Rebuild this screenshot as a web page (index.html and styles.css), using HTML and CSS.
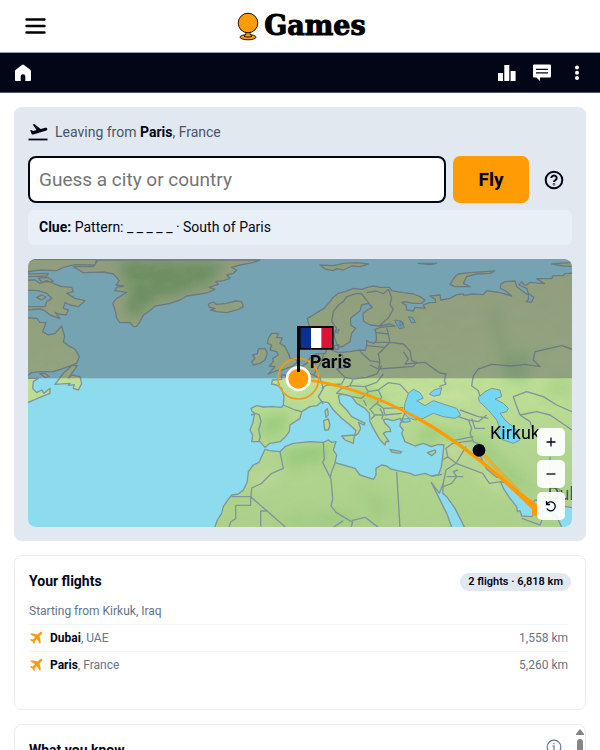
FILE: index.html
```
<!DOCTYPE html>
<html lang="en">
<head>
<meta charset="utf-8">
<meta name="viewport" content="width=device-width, initial-scale=1">
<title>Games</title>
<link rel="stylesheet" href="styles.css">
</head>
<body>
<header class="top">
  <button class="icon-btn" type="button" aria-label="Menu">
    <svg width="22" height="18" viewBox="0 0 22 18"><path d="M2.500 2.500h18M2.500 9h18M2.500 15.500h18" stroke="#000" stroke-width="2.400" stroke-linecap="round"/></svg>
  </button>
  <a class="brand" href="#">
    <svg width="22" height="29" viewBox="0 0 22 29" fill="#ff9b05" stroke="#1d1405" stroke-width="1">
      <ellipse cx="11" cy="25.2" rx="8" ry="2.6"/>
      <path d="M8.500 20h5c-.8 1.600-.8 2.600 1.500 4.300-2 1-6 1-8 0 2.300-1.700 2.300-2.700 1.500-4.300z"/>
      <circle cx="11" cy="11" r="9.800"/>
      <path d="M13.500 4.500q3 1 4 4" fill="none" stroke="#ffb545"/>
    </svg>
    <span>Games</span>
  </a>
</header>
<nav class="bar">
  <a href="#" aria-label="Home"><svg width="18" height="18" viewBox="0 0 18 18"><path fill="#fff" d="M8 .900q1-.7 2 0l6.300 4.800q.7.600.7 1.500V16q0 1-1 1h-4.700v-4.400a2.300 2.300 0 0 0-4.600 0V17H2q-1 0-1-1V7.200q0-.9.700-1.500z"/></svg></a>
  <div class="bar-tools">
    <button type="button" aria-label="Statistics"><svg width="20" height="18" viewBox="0 0 20 18"><path fill="#fff" d="M1 9h5v8H1zM7.300 1h5v16h-5zM13.600 7h5v10h-5z"/></svg></button>
    <button type="button" aria-label="Feedback"><svg width="20" height="18" viewBox="0 0 20 18"><path fill="#fff" d="M2 .500h16q1 0 1 1v11q0 1-1 1H8V17l-3.500-3.500H2q-1 0-1-1v-11q0-1 1-1z"/><path stroke="#020617" stroke-width="1.300" d="M4 5.300h12M4 8.800h12"/></svg></button>
    <button class="more" type="button" aria-label="More"><svg width="6" height="18" viewBox="0 0 6 18" fill="#fff"><circle cx="3" cy="3.500" r="2"/><circle cx="3" cy="8.800" r="2"/><circle cx="3" cy="14" r="2"/></svg></button>
  </div>
</nav>
<main>
  <section class="play">
    <p class="leaving">
      <svg width="20" height="18" viewBox="0 0 20 18"><path fill="#020617" d="M2.200 7.200l1.200-.300 1.700 1.200 3.500-1L4.700 1.600 6.300 1l6.300 5 4-1.100c1.500-.400 2.500.200 2.700 1 .200.800-.3 1.500-1.600 1.900L5.300 11.500q-1.100.300-1.700-.600z"/><path stroke="#020617" stroke-width="1.800" d="M.500 16.500h19"/></svg>
      <span>Leaving from <b>Paris</b>, France</span>
    </p>
    <form class="guess">
      <input type="text" aria-label="Guess a city or country" placeholder="Guess a city or country">
      <button class="fly" type="button">Fly</button>
      <button class="help" type="button" aria-label="Help"><svg width="20" height="20" viewBox="0 0 20 20" fill="none" stroke="#020617" stroke-width="2"><circle cx="10" cy="10" r="8.300"/><path d="M7.300 8a2.700 2.500 0 1 1 4.100 2.200q-1.400.8-1.400 1.800"/><circle cx="10" cy="14.300" r=".300"/></svg></button>
    </form>
    <p class="clue"><b>Clue:</b> Pattern: _ _ _ _ _ · South of Paris</p>
    <div class="map">
      <svg class="world" viewBox="24 27 1632 804" role="img" aria-label="Flight map">
        <defs>
          <path id="land" d="M693 475L710 467 730 471 755 470 785 472 790 465 792 440 785 415 770 405 755 402 757 390 785 388 785 375 795 375 799 382 825 366 840 352 860 340 872 320 888 312 915 310 920 302 913 292 913 275 935 265 938 280 932 298 955 308 990 305 1020 300 1035 302 1041 285 1040 272 1052 278 1062 280 1070 270 1068 250 1065 238 1080 233 1100 230 1125 228 1110 222 1080 228 1050 225 1030 213 1029 190 1042 180 1057 172 1045 160 1025 165 1020 182 1000 198 992 205 992 225 1007 235 995 250 990 275 970 288 955 293 945 268 940 248 925 262 910 268 885 260 870 235 862 205 880 195 895 185 912 175 930 155 938 143 955 130 975 125 1000 115 1025 118 1040 113 1060 108 1080 112 1108 112 1115 122 1150 128 1180 132 1200 140 1215 150 1205 160 1180 160 1155 155 1145 157 1158 166 1160 180 1180 183 1185 172 1215 175 1210 165 1228 158 1247 157 1246 148 1230 138 1260 135 1262 150 1290 145 1310 134 1330 132 1332 137 1355 132 1390 134 1400 122 1440 128 1475 138 1460 125 1440 114 1443 102 1455 95 1485 93 1490 110 1510 125 1525 135 1526 148 1518 155 1535 157 1541 142 1525 130 1520 115 1497 105 1505 95 1512 104 1520 105 1530 97 1573 101 1550 86 1595 86 1600 77 1630 77 1635 71 1670 69V775L1610 765 1560 752 1545 750 1535 765 1515 750 1490 720 1465 700 1442 695 1450 715 1470 745 1490 770 1492 785 1500 782 1505 798 1535 800 1548 785 1560 770 1572 785 1590 788 1610 800 1632 845H1340L1325 815 1305 775 1280 740 1268 730 1270 700 1258 730 1234 697 1255 740 1280 790 1300 845H582L585 830 592 810 605 790 610 770 620 755 635 735 655 732 670 720 682 695 685 665 700 645 717 637 735 598 748 602 780 605 795 590 820 580 870 575 910 577 925 570 935 577 948 575 940 600 950 615 945 638 970 645 1005 655 1020 675 1060 688 1068 675 1068 655 1085 645 1100 648 1112 657 1130 661 1170 670 1185 677 1215 670 1235 678 1255 675 1264 650 1268 620 1272 585 1255 583 1235 590 1210 580 1185 588 1155 575 1145 550 1150 540 1140 528 1142 517 1170 514 1165 508 1145 515 1140 505 1120 512 1100 507 1090 509 1095 520 1110 535 1112 545 1100 545 1090 550 1107 575 1098 574 1095 585 1080 570 1060 535 1050 515 1048 490 1035 475 1010 460 995 440 980 435 965 432 955 438 960 460 980 480 995 500 1035 520 1032 525 1015 517 1022 535 1015 550 1003 558 1008 542 990 525 965 505 940 480 925 458 905 455 890 467 870 470 845 485 840 505 810 525 808 545 795 562 780 575 750 580 735 592 720 575 695 575 698 555 690 540 698 520 704 490 696 484Z
            M235 30L720 30 700 37 660 45 635 52 650 60 640 70 620 75 630 85 610 92 587 95 595 103 567 112 585 118 560 129 500 138 480 150 450 160 405 168 395 178 370 196 360 215 350 229 340 230 330 217 300 218 290 205 286 182 278 160 290 145 320 127 285 122 290 112 312 108 288 105 298 92 280 72 250 66 190 68 160 50 220 50Z
            M565 162L580 156 590 163 620 160 645 153 665 155 670 170 655 178 620 188 590 185 572 180 585 176 568 171Z
            M900 45L940 47 970 40 1010 38 1045 42 1020 50 995 48 970 60 950 56 940 62 915 57Z
            M755 250L775 250 770 263 787 263 780 280 795 290 805 310 810 325 830 328 830 338 815 350 785 360 770 362 745 372 765 350 748 348 760 335 758 325 775 315 770 305 750 300 755 285 742 280 745 265Z
            M715 297L735 295 742 310 735 330 720 340 700 345 695 335 705 325 698 315 712 311Z
            M18 90L45 90 60 100 80 92 100 100 125 110 155 112 160 125 140 130 165 145 195 152 175 170 150 165 135 158 130 175 145 180 138 195 115 192 105 187 120 206 90 195 75 182 60 177 18 180V170L75 170 80 155 95 145 80 130 55 122 18 120Z
            M18 42L40 28 230 28 225 45 165 44 130 52 110 62 60 60 18 66ZM18 72L85 70 80 78 18 80ZM55 84L85 83 100 94 65 96Z
            M50 142L65 135 78 141 65 150Z
            M18 203L50 205 60 217 78 218 68 245 85 255 105 250 125 228 134 260 130 275 150 290 165 297 178 320 170 340 130 355 100 365 60 365 35 368 18 380Z
            M172 347L155 370 146 384 155 375 180 380 185 400 175 420 160 415 163 404 145 406 150 400 105 403 115 390 130 370 155 347Z
            M18 385L55 385 40 395 38 415 50 428 65 420 72 430 90 415 90 430 60 442 18 460ZM60 371L75 370 88 380 75 382Z
            M1290 103L1305 80 1315 72 1350 68 1425 63 1410 70 1370 72 1340 80 1330 100 1350 110 1305 110Z
            M1595 42L1670 36V50L1630 48ZM1195 40H1250L1230 44Z
            M915 482L922 476 925 494 918 502ZM911 512L925 507 930 525 925 540 914 540ZM965 558L1003 555 1000 580 975 570ZM1110 598L1145 605 1140 610 1115 606ZM1222 608L1245 600 1248 606 1235 617ZM943 287L957 284 955 298 945 297Z"/>
          <clipPath id="on-land"><use href="#land"/></clipPath>
          <linearGradient id="ground" x1="0" y1="0" x2="0" y2="1">
            <stop offset="0" stop-color="#bfd293"/><stop offset=".45" stop-color="#c0e096"/><stop offset=".7" stop-color="#b2d58f"/><stop offset="1" stop-color="#acd089"/>
          </linearGradient>
          <filter id="soft" x="-30%" y="-30%" width="160%" height="160%"><feGaussianBlur stdDeviation="18"/></filter>
          <filter id="relief" x="0" y="0" width="100%" height="100%">
            <feTurbulence type="fractalNoise" baseFrequency=".02 .035" numOctaves="3" seed="4"/>
            <feColorMatrix values="0 0 0 0 .42  0 0 0 0 .67  0 0 0 0 .32  1.800 0 0 0 -.700"/>
          </filter>
        </defs>
        <path fill="#8ddcee" d="M24 27h1632v804H24z"/>
        <use href="#land" fill="url(#ground)"/>
        <g clip-path="url(#on-land)">
          <g filter="url(#soft)">
            <path fill="#80ba64" d="M290 30L610 35 580 95 480 130 400 150 345 205 315 185 330 120z"/>
            <path fill="#8cc472" opacity=".6" d="M790 600l130-20 10 50-120 30zM720 500l90-20-20 70-70 10zM1200 530l180 30 60 60 120 110-90-40-120-120-150 10zM960 410l110 10 30 60-80-20zM1450 320l80-20v100l-80-10z"/>
            <path fill="#8cc472" opacity=".35" d="M1400 180l40 0 40 180h-30zM1580 380h80v60h-80zM800 800l200-20 10 50H790zM1010 700l110 60-50 60z"/>
            <path fill="#d6e5a8" opacity=".5" d="M680 690l90-30 10 20-80 30zM1240 560l70 20 40 60-70-30zM1150 410l230 20-40 30-180-20zM1350 620l90 80 30 50-100-70z"/>
          </g>
          <path filter="url(#relief)" opacity=".35" d="M24 27h1632v804H24z"/>
        </g>
        <use href="#land" fill="none" stroke="#7f969a" stroke-width="4" stroke-linejoin="round"/>
        <g fill="#73d7f2" stroke="#7f969a" stroke-width="3" stroke-linejoin="round">
          <path d="M1165 430L1180 418 1200 428 1210 445 1190 452 1215 467 1240 452 1270 462 1310 475 1322 495 1305 505 1270 500 1240 490 1210 505 1185 510 1165 503 1152 490 1155 460Z"/>
          <path d="M1228 432L1242 420 1265 413 1260 435 1240 438Z"/>
          <path d="M1375 442L1395 425 1415 415 1440 420 1445 440 1425 447 1450 460 1465 475 1460 485 1440 490 1455 510 1490 540 1500 570 1480 580 1445 568 1430 550 1440 535 1430 510 1405 480 1378 455Z"/>
          <path d="M1125 210l20 3 8 20-15 3-10-15zM1165 200l12 2 10 15-12 2zM1140 215l12 5-12 8zM943 243l15-5-5 12z"/>
          <path d="M1142 508l25-3 4 9-15 3z"/>
        </g>
        <g fill="none" stroke="#7f969a" stroke-width="4" stroke-linejoin="round">
          <path d="M940 260l10-25-15-20 5-30 15-20 15-10 10-15 30-10 15 2 20 25 10 15M1040 128l30-5 20 8 15-13M1105 118l10 25-5 20 10 15-15 25-30 27M1100 232l5 20-40-5M1105 252l5 25-45 0M1110 277l-15 15-55-5M1095 292l-20 20 5 25-30-5-30-28M1080 337l-5 20M1110 277l40 5 20 20 5 30 15 5-10 12-105 8-25-12"/>
          <path d="M1150 305l15 22-10 15 60-5 30 22 15 10 18 3-5 20 5 10-20 8"/>
          <path d="M912 310l-10 30-12 20-10 15 20 10 10 30-15 25 15 22M790 465l35 15 20 5M880 375l-40-15M965 312l15 40-30 5 25 25-10 20-45 3-15 10M975 382l25 5 40-5 30-10 15-25M1000 387l-10 20-25 8-15 15 15 2M990 407l45 3 35-13 20-25M1035 410l10 15-20 20-30-5M1045 425l30-5 30-22 35 5 25 27M1075 420l10 22-15 18 20 15 60-2M1030 450l10 18M1070 460l-20 18 15 18-12 12M1065 495l25 0-10-20M1090 495l-5 12M1090 475l5 20 50-5M1145 510l10-20"/>
          <path d="M693 495l15-5 10 5 5 20-7 25 5 20-5 15M910 577l3 50-5 10 25 50 5 60-5 20 15 20 25 15 25 15-5 15M780 605l10 50-35 15-30 30-30 14-2 26H635M692 740v26h-45v40l-15 10-8 25M692 740l105 92M722 830v-47h22M945 640l-10 25-5 20M970 812l-30 20M995 812l40-10 40 30M1130 665l10 170M1234 678l32-5M1268 630l15-10-5-25 20-15 60-8M1283 620l25 20-30 20-10 50M1308 640l30-50M1308 640l80 30 20 30 35-5M1280 680l50 0M1270 710l25-10 15-20-10-15 14-5"/>
          <path d="M1315 500l30 10 30 5 25-20M1345 510l10 25-5 15 10 25 30 12-10 30 20 40 30 25 20 0M1360 560l-60 12M1320 480l55 20 30 5M1355 505l10 30 30 0M1380 440l-5-18-20-15 5-30 15-20 40-14 60 5 40-5 45 7-20-20 5-25 80-18 30 10 15-2 20 15 25 2"/>
          <path d="M1485 455l-5-15 40-15 50 15 40 25 46 20M1485 455l15 40 50-10 40 10 66 45M1500 495l30 20 10 30M1590 620v80l30 20-20 40M1505 805l55 20 10-25"/>
        </g>
        <path fill="#54545f" opacity=".420" d="M24 27h1632v358H24z"/>
        <path d="M1377 601L1545 775" stroke="#ff9b05" stroke-width="13" opacity=".5"/>
        <path fill="none" stroke="#ff9b05" stroke-width="8" d="M835 386Q1010 405 1190 503"/>
        <path fill="none" stroke="#ff9b05" stroke-width="10" d="M1185 500Q1370 602 1555 790"/>
        <path fill="#ff9b05" d="M1480 715l56 56v26h20v-30l-20-16z"/>
        <circle cx="835" cy="386" r="61" fill="none" stroke="#ed9b20" stroke-width="5"/>
        <circle cx="835" cy="386" r="34" fill="#ff9b05" stroke="#fff" stroke-width="8"/>
        <path fill="#09090b" d="M831 228h110v71H840v67h-9z"/>
        <path fill="#0b318f" d="M842 234h31v60h-31z"/><path fill="#fff" d="M873 234h32v60h-32z"/><path fill="#de1238" d="M905 234h31v60h-31z"/>
        <circle cx="1377" cy="601" r="19" fill="#020617"/>
        <text class="place strong" x="869" y="354">Paris</text>
        <text class="place" x="1410" y="568">Kirkuk</text>
        <text class="place faded" x="1583" y="750">Dubai</text>
      </svg>
      <div class="zoomers">
        <button type="button" aria-label="Zoom in"><svg width="12" height="12" viewBox="0 0 12 12"><path d="M1.500 6h9M6 1.500v9"/></svg></button>
        <button type="button" aria-label="Zoom out"><svg width="12" height="12" viewBox="0 0 12 12"><path d="M1.500 6h9"/></svg></button>
        <button type="button" aria-label="Reset view"><svg width="12" height="12" viewBox="0 0 12 12"><path d="M1.500 1v3.500H5M1.700 4.300A4.500 4.500 0 1 1 1.800 8.500"/></svg></button>
      </div>
    </div>
  </section>
  <section class="card flights">
    <div class="head"><h2>Your flights</h2><span class="pill">2 flights · 6,818 km</span></div>
    <ul>
      <li>Starting from Kirkuk, Iraq</li>
      <li><svg class="plane" width="14" height="14" viewBox="0 0 14 14"><path d="M12.900 1.100c.5.500.2 1.500-.5 2.200L10.600 5.200l1.200 6.200-1.200 1.200-2.700-4.700-2.300 2.300.3 1.900-.9.900-1.500-2.500L1 9l.9-.9 1.900.3 2.300-2.300L1.400 3.400l1.200-1.200 6.200 1.200 1.900-1.800c.7-.7 1.700-1 2.200-.5z"/></svg><span><b>Dubai</b>, UAE</span><span class="km">1,558 km</span></li>
      <li><svg class="plane" width="14" height="14" viewBox="0 0 14 14"><path d="M12.900 1.100c.5.500.2 1.500-.5 2.200L10.600 5.200l1.200 6.200-1.200 1.200-2.700-4.700-2.300 2.300.3 1.900-.9.900-1.500-2.500L1 9l.9-.9 1.900.3 2.300-2.300L1.400 3.400l1.200-1.200 6.200 1.200 1.900-1.800c.7-.7 1.700-1 2.200-.5z"/></svg><span><b>Paris</b>, France</span><span class="km">5,260 km</span></li>
    </ul>
  </section>
  <section class="card know">
    <div class="head"><h2>What you know</h2>
      <button type="button" aria-label="Information"><svg width="16" height="16" viewBox="0 0 16 16" fill="none" stroke="#64748b" stroke-width="1.200"><circle cx="8" cy="8" r="6.800"/><path d="M6.500 7H8v4.500M6.300 11.500h3.400M7.300 4.700h1.200"/></svg></button>
    </div>
    <div class="scroller"><svg width="8" height="6" viewBox="0 0 8 6"><path fill="#858585" d="M3.300.7q.7-.8 1.400 0L8 5v1H0V5z"/></svg><i></i></div>
  </section>
</main>
</body>
</html>
```
FILE: styles.css
```
* { box-sizing: border-box; }
body {
  margin: 0;
  height: 100vh;
  overflow: hidden;
  display: flex;
  flex-direction: column;
  font: 14px/20px Roboto, sans-serif;
  color: #020617;
  background: #fff;
}
p, h2, ul { margin: 0; padding: 0; }
b { font-weight: 700; }
svg { display: block; flex: none; }
button { padding: 0; border: 0; background: none; font: inherit; color: inherit; display: grid; place-items: center; }

.top {
  flex: none;
  display: grid;
  grid-template-columns: 1fr auto 1fr;
  align-items: center;
  height: 53px;
  padding: 0 24px;
  border-bottom: 1px solid #94a3b8;
}
.icon-btn { justify-self: start; }
.brand {
  display: flex;
  align-items: center;
  gap: 5px;
  padding-left: 3px;
  color: #000;
  text-decoration: none;
  font: bold 27px/32px "DejaVu Serif", serif;
  -webkit-text-stroke: 1px #000;
}
.bar {
  flex: none;
  display: flex;
  align-items: center;
  justify-content: space-between;
  height: 40px;
  padding: 0 20px 0 14px;
  background: #020617;
  border-bottom: 1px solid #475569;
}
.bar-tools { display: flex; gap: 15px; }
.more { margin-left: 7px; }

main { flex: 1; min-height: 0; display: flex; flex-direction: column; gap: 14px; padding: 14px 14px 0; }
.play { flex: none; padding: 14px; border-radius: 8px; background: #e2e8f0; }
.leaving { display: flex; align-items: center; gap: 7px; height: 21px; color: #475569; }
.leaving b { color: #020617; }
.guess { display: flex; gap: 7px; margin-top: 14px; }
.guess input {
  flex: 1;
  min-width: 0;
  height: 47px;
  padding: 0 9px;
  border: 2px solid #020617;
  border-radius: 8px;
  background: #fff;
  font: 19px/28px Roboto, sans-serif;
}
.guess input::placeholder { color: #757575; opacity: 1; }
.fly { width: 76px; border-radius: 7px; background: #ff9b05; font-size: 19px; font-weight: 700; }
.help { width: 36px; }
.clue { margin-top: 7px; padding: 7px 11px 8px; border-radius: 6px; background: #e9eff6; }
.map { position: relative; margin-top: 14px; border-radius: 8px; overflow: hidden; }
.world { width: 100%; height: auto; }
.place { font: 54px Roboto, sans-serif; fill: #020617; }
.strong { font-weight: 700; }
.faded { opacity: .6; }
.zoomers { position: absolute; right: 7px; bottom: 7px; display: grid; gap: 4px; }
.zoomers button { width: 28px; height: 28px; border-radius: 5px; background: rgba(255, 255, 255, .93); }
.zoomers path { fill: none; stroke: #020617; stroke-width: 1.3; }

.card { border: 1px solid #e9eef4; border-radius: 8px; padding: 14px; }
.flights { flex: none; min-height: 155px; }
.head { display: flex; justify-content: space-between; align-items: center; }
h2 { font-size: 14px; line-height: 22px; font-weight: 700; }
.pill { margin-top: 2px; padding: 0 8px; border-radius: 9px; background: #e2e8f0; font-size: 11px; line-height: 18px; font-weight: 600; }
ul { list-style: none; margin: 5px 3px 0 0; color: #64748b; font-size: 12px; }
li { display: flex; align-items: center; height: 27px; }
li + li { border-top: 1px solid #f1f5f9; }
li b { color: #020617; }
.plane { margin-right: 7px; fill: #ff9b05; }
.km { margin-left: auto; }
.know { position: relative; flex: 1; min-height: 0; overflow: hidden; border-bottom: 0; border-radius: 8px 8px 0 0; }
.know .head { padding-right: 9px; }
.know button svg { margin-bottom: 6px; }
.scroller { position: absolute; top: 4px; right: 1px; bottom: 0; display: flex; flex-direction: column; align-items: center; gap: 4px; }
.scroller i { width: 6px; flex: 1; border-radius: 3px 3px 0 0; background: #858585; }
```
